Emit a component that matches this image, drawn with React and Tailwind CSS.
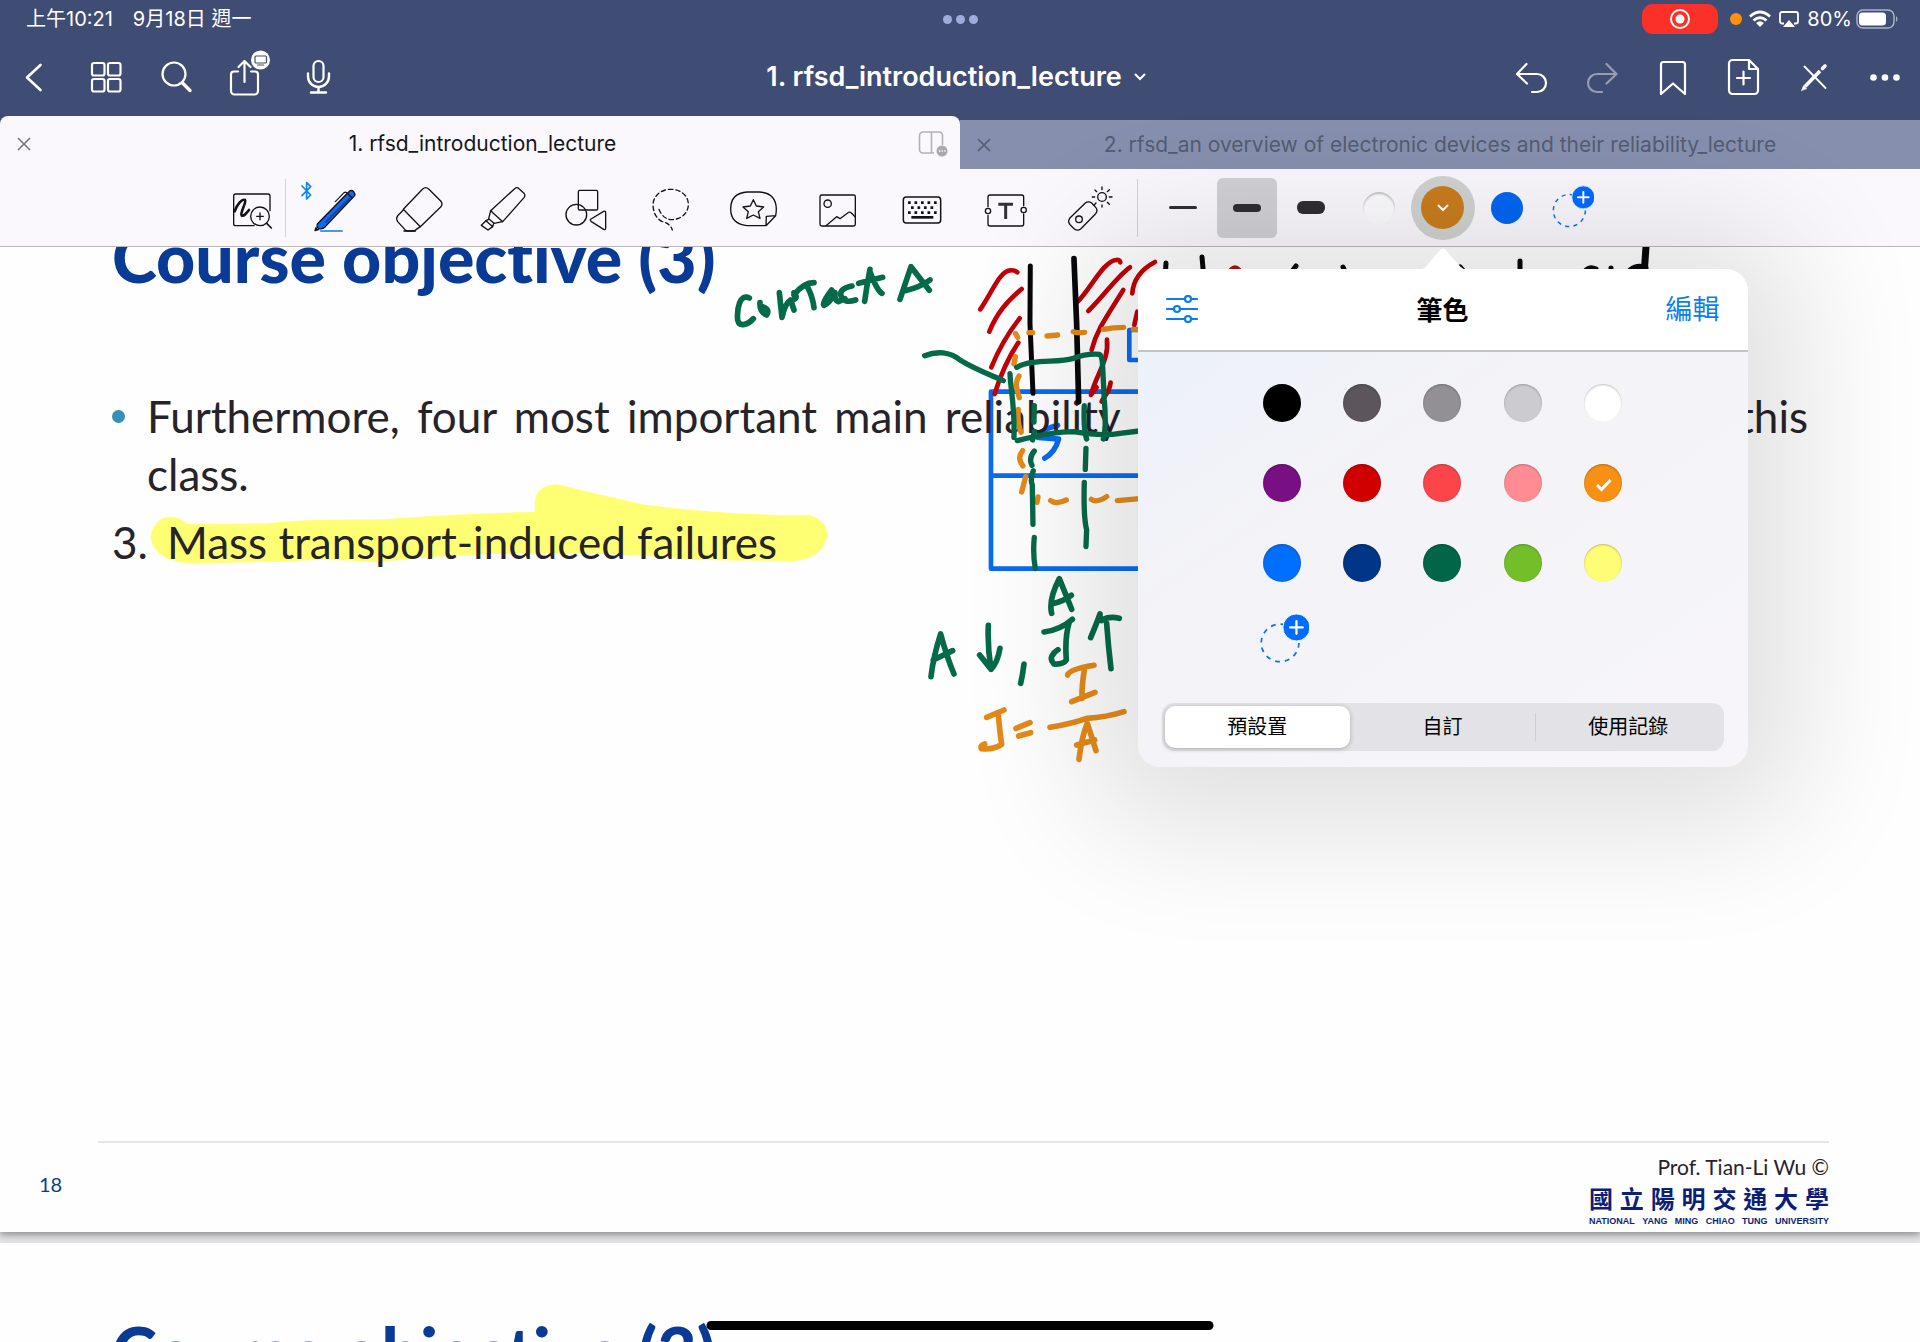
import React, { useState } from "react";

const UI = "font-['Inter','Noto_Sans_CJK_TC',sans-serif]";

/* ---------- navigation glyphs ---------- */

function NavIcon({ box, children, dim }) {
  return (
    <svg
      viewBox={box}
      className={dim ? "size-10 overflow-visible opacity-45" : "size-10 overflow-visible"}
      fill="none"
      stroke="white"
      strokeWidth="2.2"
      strokeLinecap="round"
      strokeLinejoin="round"
      aria-hidden="true"
    >
      {children}
    </svg>
  );
}

const leftNav = [
  {
    label: "返回",
    icon: (
      <NavIcon box="16 57 40 40">
        <path d="M40.500 65 27 77.500 40.500 90" strokeWidth="2.600" />
      </NavIcon>
    ),
  },
  {
    label: "縮圖",
    icon: (
      <NavIcon box="87 57 40 40">
        <rect x="92" y="63" width="12.500" height="12.500" rx="2" />
        <rect x="108" y="63" width="12.500" height="12.500" rx="2" />
        <rect x="92" y="79" width="12.500" height="12.500" rx="2" />
        <rect x="108" y="79" width="12.500" height="12.500" rx="2" />
      </NavIcon>
    ),
  },
  {
    label: "搜尋",
    icon: (
      <NavIcon box="158 57 40 40">
        <circle cx="174" cy="74" r="11.500" />
        <path d="M182.500 83 190 90.500" strokeWidth="3.400" />
      </NavIcon>
    ),
  },
  {
    label: "分享",
    icon: (
      <NavIcon box="229 57 40 40">
        <path d="M238 71.500h-4a3 3 0 0 0-3 3V91a3.500 3.500 0 0 0 3.500 3.500h20A3.500 3.500 0 0 0 258 91V74.500a3 3 0 0 0-3-3h-4" />
        <path d="M244.500 82V61.500M238.500 67l6-6 6 6" />
        <circle cx="260.500" cy="60" r="9.500" fill="white" stroke="none" />
        <rect x="255" y="56" width="11.500" height="7" rx="1" stroke="#3f4c73" strokeWidth="1.200" />
        <path d="M257.500 65h6" stroke="#3f4c73" strokeWidth="1.200" />
      </NavIcon>
    ),
  },
  {
    label: "錄音",
    icon: (
      <NavIcon box="300 57 40 40">
        <rect x="313.500" y="61" width="10" height="21" rx="5" />
        <path d="M308 73.500v3a10.500 10.500 0 0 0 21 0v-3M318.500 87v5M311 92.500h15" strokeWidth="2.400" />
      </NavIcon>
    ),
  },
];

const rightNav = [
  {
    label: "復原",
    icon: (
      <NavIcon box="1510 57 40 40">
        <path d="M1526.500 64 1517 74l10 9.500M1517.500 74H1537a9 9 0 0 1 0 18h-5" />
      </NavIcon>
    ),
  },
  {
    label: "重做",
    icon: (
      <NavIcon box="1581 57 40 40" dim>
        <path d="M1606.500 64l10 10-10 9.500M1616.500 74H1597a9 9 0 0 0 0 18h5" />
      </NavIcon>
    ),
  },
  {
    label: "書籤",
    icon: (
      <NavIcon box="1652 57 40 40">
        <path d="M1661 94V64.500a2.500 2.500 0 0 1 2.500-2.500h19a2.500 2.500 0 0 1 2.500 2.500V94l-12-10.500z" />
      </NavIcon>
    ),
  },
  {
    label: "新增頁面",
    icon: (
      <NavIcon box="1723 57 40 40">
        <path d="M1732.500 60H1749l9 9v21.500a3.500 3.500 0 0 1-3.500 3.500h-22a3.500 3.500 0 0 1-3.500-3.500v-27a3.500 3.500 0 0 1 3.500-3.500zM1749 60v9h9" />
        <path d="M1743.500 71.500v13M1737 78h13" />
      </NavIcon>
    ),
  },
  {
    label: "唯讀模式",
    icon: (
      <NavIcon box="1794 57 40 40">
        <path d="M1805 86.500 1820 71" strokeWidth="3.600" strokeLinecap="butt" />
        <path d="M1801.500 90.500l2-5 3 3z" fill="white" strokeWidth="0.500" />
        <path d="M1822.500 68.500 1825 66" strokeWidth="3.600" />
        <path d="M1804.500 66.500 1825.500 88" strokeWidth="1.800" />
      </NavIcon>
    ),
  },
  {
    label: "更多",
    icon: (
      <NavIcon box="1865 57 40 40">
        <g fill="white" stroke="none">
          <circle cx="1873.500" cy="77.500" r="3.300" />
          <circle cx="1885" cy="77.500" r="3.300" />
          <circle cx="1896.500" cy="77.500" r="3.300" />
        </g>
      </NavIcon>
    ),
  },
];

/* ---------- toolbar glyphs ---------- */

function ToolIcon({ box, children }) {
  return (
    <svg
      viewBox={box}
      className="size-[60px]"
      fill="none"
      stroke="#111118"
      strokeWidth="4"
      strokeLinecap="round"
      strokeLinejoin="round"
      aria-hidden="true"
    >
      {children}
    </svg>
  );
}

const zoomIcon = (
  <ToolIcon box="66 22 180 180">
    <path d="M162 165H107q-6 0-6-6V76q0-6 6-6h97q6 0 6 6v44" />
    <path d="M104 122C112 100 126 84 135 88c6 6-16 38-10 46 6 4 14-6 22-16" strokeWidth="8" />
    <circle cx="180" cy="137" r="28" />
    <path d="M180 127v20M170 137h20" />
    <path d="M200 158l14 14" strokeWidth="5" />
  </ToolIcon>
);

const tools = [
  {
    label: "鋼筆",
    icon: (
      <ToolIcon box="312 22 180 180">
        <path d="M306 46l26 27-12 12V36l12 12-26 27" stroke="#0a84ff" strokeWidth="5" />
        <path d="M362 181h65" stroke="#1a76d8" />
        <path d="M352 160 432 78l18-18q6-2 11 3 5 6 3 12L376 168q-8 8-19 6-8-4-5-14z" fill="#1268ee" />
        <path d="M442 68l14 14" />
        <path d="M406 93l26-27q4-3 8 0" strokeWidth="3.500" />
        <path d="M378 154l70-70" stroke="#1c3f86" strokeWidth="5" />
        <path d="M348 170l-3 10 11-3" fill="#111118" />
      </ToolIcon>
    ),
  },
  {
    label: "橡皮擦",
    icon: (
      <ToolIcon box="564 22 180 180">
        <path d="M610 116 668 55q9-8 18 0l36 36q8 9 0 18l-61 59z" />
        <path d="M610 118l-17 17q-6 9 0 18l22 24q4 4 8 4h16q5 0 9-4l13-9" />
        <path d="M612 181h34" strokeWidth="5" />
      </ToolIcon>
    ),
  },
  {
    label: "螢光筆",
    icon: (
      <ToolIcon box="816 22 180 180">
        <path d="M872 120 944 54q7-6 13 0l15 14q5 6 0 13l-64 72z" />
        <path d="M872 120l-6 24 16 14 26-5M866 146l-8 4 20 18 3-10" />
        <path d="M858 150l-14 14 20 14 14-10" />
      </ToolIcon>
    ),
  },
  {
    label: "形狀",
    icon: (
      <ToolIcon box="1068 22 180 180">
        <rect x="1135" y="59" width="58" height="59" rx="4" />
        <circle cx="1129" cy="132" r="31" />
        <path d="M1173 145l38-23q6-2 6 4v46q0 7-6 4l-38-24q-4-4 0-7z" />
      </ToolIcon>
    ),
  },
  {
    label: "套索",
    icon: (
      <ToolIcon box="0 22 180 180">
        <path d="M57 116q12 30 38 31c30-1 50-20 50-46S122 56 92 56 39 76 39 104q2 34 26 48 26 6 32 26" strokeDasharray="13 9" />
      </ToolIcon>
    ),
  },
  {
    label: "貼紙",
    icon: (
      <ToolIcon box="252 22 180 180">
        <path d="M378 165h-58q-48-6-48-50 0-48 50-51h36q50 3 51 51 0 10-2 20l-29 30zM378 164l1-27 28-2" />
        <path d="M340 87l9 19 22 3-16 14 5 20-20-10-20 10 5-20-16-14 22-3z" />
      </ToolIcon>
    ),
  },
  {
    label: "圖片",
    icon: (
      <ToolIcon box="502 22 180 180">
        <rect x="538" y="73" width="106" height="93" rx="5" />
        <circle cx="561" cy="99" r="11" />
        <path d="M556 165l32-27 10 6 26-19q4-2 8 2l12 12" />
      </ToolIcon>
    ),
  },
  {
    label: "鍵盤",
    icon: (
      <ToolIcon box="754 22 180 180">
        <rect x="788" y="79" width="112" height="78" rx="9" strokeWidth="4.500" />
        <g strokeLinecap="butt" strokeWidth="8">
          <path d="M802 96h88M802 126h88" strokeDasharray="8 11.500" />
          <path d="M811 111h68" strokeDasharray="8 11.500" />
          <path d="M812 140h66" />
        </g>
      </ToolIcon>
    ),
  },
  {
    label: "文字",
    icon: (
      <ToolIcon box="1004 22 180 180">
        <path d="M1040 108V79q0-6 6-6h95q6 0 6 6v26M1147 130v30q0 6-6 6h-95q-6 0-6-6v-26" />
        <circle cx="1040" cy="121" r="8" />
        <circle cx="1147" cy="118" r="8" />
        <path d="M1071 101h44M1093 102v43" stroke="#303035" strokeWidth="9" strokeLinecap="butt" />
      </ToolIcon>
    ),
  },
  {
    label: "雷射筆",
    icon: (
      <ToolIcon box="1258 22 180 180">
        <path d="M1334 97q9-7 19 0l12 13q8 9 0 19l-45 46q-9 7-19 0l-12-12q-9-10-2-20z" />
        <circle cx="1315" cy="146" r="10" />
        <circle cx="1384" cy="79" r="13" />
        <path d="M1360 104l6-7" />
        <path d="M1384 57v-8M1384 109v-6M1406 79h8M1362 79h-7M1400 63l6-6M1368 63l-5-5M1400 95l6 6" />
      </ToolIcon>
    ),
  },
];

/* ---------- colour picker ---------- */

const swatches = [
  ["黑色", "bg-black"],
  ["深灰", "bg-[#5c565c]"],
  ["灰色", "bg-[#929095]"],
  ["淺灰", "bg-[#cccbcf]"],
  ["白色", "bg-white"],
  ["紫色", "bg-[#780f82]"],
  ["深紅", "bg-[#d00000]"],
  ["紅色", "bg-[#fb4549]"],
  ["粉紅", "bg-[#ff8b93]"],
  ["橘色", "bg-[#f79013]"],
  ["藍色", "bg-[#006eff]"],
  ["深藍", "bg-[#003587]"],
  ["深綠", "bg-[#006647]"],
  ["綠色", "bg-[#74bf29]"],
  ["黃色", "bg-[#fffc76]"],
];

function AddColor({ large }) {
  return (
    <svg viewBox="0 0 56 56" className={large ? "size-14" : "size-[46px]"} fill="none" aria-hidden="true">
      <circle cx="26" cy="31" r="19.500" stroke="#0a74e8" strokeWidth="1.800" strokeDasharray="5 5.200" />
      <circle cx="43" cy="15" r="14" fill="#006bff" stroke="#f4f3f8" strokeWidth="1" />
      <path d="M43 8.500v13M36.500 15h13" stroke="white" strokeWidth="2.400" strokeLinecap="round" />
    </svg>
  );
}

function ColorPopover() {
  const [picked, setPicked] = useState("橘色");
  const [tab, setTab] = useState("預設置");
  const tabs = ["預設置", "自訂", "使用記錄"];
  return (
    <div
      role="dialog"
      aria-label="筆色"
      className="absolute top-[93px] left-1/2 z-20 w-[610px] -translate-x-1/2 rounded-[22px] bg-[#f5f4f8] shadow-[0_10px_130px_50px_rgba(0,0,0,0.12)]"
    >
      <svg viewBox="0 0 44 22" className="absolute -top-[21px] left-1/2 h-[22px] w-11 -translate-x-1/2" aria-hidden="true">
        <path d="M0 22Q4 20 8 15L19 2q3-3 6 0l11 13q4 5 8 7z" fill="white" />
      </svg>
      <header className="flex h-[83px] items-center justify-between rounded-t-[22px] border-b-2 border-[#c4c4c8] bg-white px-7">
        <button aria-label="設定" className="w-[54px]">
          <svg viewBox="0 0 32 28" className="h-7 w-8" fill="none" stroke="#0a7cf0" strokeWidth="2.200" strokeLinecap="round" aria-hidden="true">
            <path d="M1 4h17M26 4h5M1 14h6M15 14h16M1 24h17M26 24h5" />
            <circle cx="22" cy="4" r="3" />
            <circle cx="11" cy="14" r="3" />
            <circle cx="22" cy="24" r="3" />
          </svg>
        </button>
        <h2 className="pt-0.5 text-[26px] font-bold text-black">筆色</h2>
        <button className="pt-0.5 text-[27px] text-[#0a7fe6]">編輯</button>
      </header>
      <div className="rounded-b-[22px] bg-linear-to-br from-[#ecf1fb] via-[#f3f3f7] via-30% to-[#f7f5f9] px-6 pb-4">
        <div className="mx-auto grid w-[402px] grid-cols-5 justify-items-center gap-y-[42px] pt-8">
          {swatches.map(([name, color]) => (
            <label key={name} className="relative flex size-[38px]">
              <input
                type="radio"
                name="pen-color"
                aria-label={name}
                checked={picked === name}
                onChange={() => setPicked(name)}
                className={`size-[38px] appearance-none rounded-full shadow-[inset_0_1px_2px_rgba(0,0,0,0.25)] ${color}`}
              />
              {picked === name && (
                <svg viewBox="0 0 38 38" className="pointer-events-none absolute inset-0" fill="none" aria-hidden="true">
                  <path d="M13 21l4.500 4.500L26.500 16" stroke="white" strokeWidth="3" />
                </svg>
              )}
            </label>
          ))}
          <button aria-label="新增顏色" className="-mt-3 flex w-[54px]">
            <AddColor large />
          </button>
        </div>
        <div className="mt-[35px] grid h-12 grid-cols-3 rounded-xl bg-[#e3e2e6] p-[3px]">
          {tabs.map((name, i) => (
            <button
              key={name}
              onClick={() => setTab(name)}
              className={`rounded-[10px] text-xl text-black ${
                tab === name ? "bg-white shadow-[0_1px_5px_rgba(0,0,0,0.25)]" : ""
              }`}
            >
              <span className={`block leading-7 ${i === 2 && tab !== name ? "border-l border-[#cfced3]" : ""}`}>{name}</span>
            </button>
          ))}
        </div>
      </div>
    </div>
  );
}

/* ---------- handwriting ---------- */

function Underlay() {
  return (
    <svg viewBox="0 247 1920 985" className="pointer-events-none absolute top-0 left-0 h-[985px] w-[1920px]" fill="none" aria-hidden="true">
      <path
        transform="translate(80 240) scale(.5102 .3333)"
        fill="#ffff73"
        d="M138 890Q145 830 180 830 200 835 210 852L370 850Q420 838 600 838 700 825 892 815 885 735 935 733 1020 765 1100 792 1250 825 1430 826 1465 840 1465 888 1455 955 1400 963L1200 960Q1060 935 850 940 700 945 580 967 480 955 400 965L220 970Q145 965 138 890z"
      />
      <g transform="translate(720 240) scale(.3333)" stroke="#0a6af2" strokeWidth="14" strokeLinecap="round" strokeLinejoin="round">
        <path d="M1270 455H813V986H1270M813 707H1270" />
        <path d="M1260 270H1228V360H1260" />
        <path d="M1013 556Q985 562 958 580M955 593L1016 597Q1006 636 974 655" strokeWidth="16" />
      </g>
    </svg>
  );
}

function Ink() {
  return (
    <svg viewBox="0 247 1920 985" className="pointer-events-none absolute top-0 left-0 h-[985px] w-[1920px]" fill="none" strokeLinecap="round" strokeLinejoin="round" aria-hidden="true">
      <g transform="translate(720 240) scale(.3333)">
        <g stroke="#c10008" strokeWidth="14">
          <path d="M781 208C815 160 840 90 872 91Q885 90 892 97M808 275C830 220 860 185 905 147M814 382C835 330 860 285 899 235M824 462C840 410 860 360 895 308" />
          <path d="M1072 186C1110 150 1150 64 1188 60Q1200 58 1201 67M1105 213C1150 170 1190 110 1230 82M1115 330C1130 270 1160 230 1210 150M1237 160C1240 120 1260 90 1305 66" />
          <path d="M1161 299C1168 360 1130 400 1113 465L1130 442M1172 428C1168 460 1150 470 1145 485M1243 255L1252 215" />
        </g>
        <g stroke="#08080a">
          <path d="M931 78L930 250 939 460" strokeWidth="15" />
          <path d="M1062 56L1070 250 1076 485" strokeWidth="17" />
        </g>
        <g stroke="#e48a18" strokeWidth="16">
          <path d="M887 281L893 292M927 278H938M981 288L1013 285M1060 275Q1075 280 1094 277M1150 268Q1180 262 1211 262M1240 268h12M886 350L882 372M897 408C883 430 890 445 898 473M895 508Q892 550 903 577M908 632Q890 655 909 678M917 710L905 756M954 771L951 787M992 782Q1010 795 1039 780M1114 778Q1130 790 1160 770M1192 782L1260 776" />
        </g>
        <g stroke="#056a49" strokeWidth="17">
          <path d="M614 347C650 333 690 335 720 360 760 385 800 400 850 422M870 401C872 450 885 500 882 592M890 382C940 355 1010 370 1060 355Q1100 340 1138 343 1147 345 1148 380L1153 480Q1160 560 1150 597M892 602C940 590 1000 575 1060 575Q1150 590 1200 580L1258 573" strokeWidth="16" />
          <path d="M943 497L942 546M943 575L938 600M943 633Q925 655 936 676M940 692Q930 720 937 735L939 853M943 892Q938 940 946 986M1093 497Q1090 570 1100 597M1098 625L1096 688M1093 727Q1090 830 1100 870L1098 920" strokeWidth="16" />
          <path d="M88 174C60 160 50 205 53 240 58 264 85 254 100 236M120 188Q118 215 140 225 152 206 122 198M178 158L186 232Q195 190 212 180L222 210M222 158Q235 172 222 178M222 165Q250 128 282 128M262 140Q278 170 282 203M335 150Q305 190 312 196 330 190 345 158 342 180 355 185L375 176M396 138Q360 145 362 165 370 192 407 180M450 88Q440 140 434 184M416 130L488 112M450 95Q470 150 486 160" />
          <path d="M540 178L573 80Q600 115 628 151M556 152Q600 142 630 120" />
        </g>
      </g>
      <g transform="translate(900 560) scale(.3333)" strokeWidth="17">
        <g stroke="#056a49">
          <path d="M455 160Q445 120 478 56 500 110 515 148M455 132Q490 125 514 106M432 216Q480 210 517 178M508 186Q494 230 499 300 490 314 462 312 450 300 456 288 462 276 474 269M572 233Q590 190 600 162M600 162Q600 190 610 178 630 168 658 175M620 190Q625 260 633 326M93 350Q100 290 122 222 140 290 162 342M100 300L158 272M265 196Q262 260 273 328 292 310 300 265M239 285L273 328M372 312Q368 345 362 370" />
        </g>
        <g stroke="#e48a18">
          <path d="M503 345Q508 328 582 316M553 330Q545 380 546 415M515 425L585 397M450 502Q520 490 560 475 620 472 672 455M537 598Q545 530 562 490 575 530 588 572M530 555L584 540M260 472L312 450M295 465Q300 520 305 553 280 570 244 566 240 556 254 552M348 505L390 488M356 528L392 518" />
        </g>
      </g>
      <g stroke="#08080a" strokeWidth="5">
        <path d="M1166 263L1165 280M1202 257L1204 280M1296 266L1290 274M1343 267L1346 274M1460 267L1466 274M1520 261V280M1586 270Q1590 266 1596 269M1611 268V274M1630 270Q1638 264 1646 268" />
        <path d="M1646 247L1644 275" strokeWidth="7" />
      </g>
      <path d="M1231 270Q1235 266 1239 270" stroke="#b01018" strokeWidth="5" />
    </svg>
  );
}

/* ---------- page ---------- */

function StatusBar() {
  return (
    <div className="grid h-[38px] grid-cols-3 items-center text-white">
      <div className="flex gap-5 pl-[26px] text-xl">
        <span>上午10:21</span>
        <span>9月18日 週一</span>
      </div>
      <div className="flex justify-center gap-1">
        <i className="size-[9px] rounded-full bg-[#a0abdc]" />
        <i className="size-[9px] rounded-full bg-[#a0abdc]" />
        <i className="size-[9px] rounded-full bg-[#a0abdc]" />
      </div>
      <div className="flex items-center justify-end pr-[22px]">
        <span className="mr-3 flex h-[30px] w-[76px] items-center justify-center rounded-[11px] bg-[#fb3029]">
          <svg viewBox="0 0 22 22" className="size-[22px]" fill="none" stroke="white" strokeWidth="2" aria-hidden="true">
            <circle cx="11" cy="11" r="9" />
            <circle cx="11" cy="11" r="4.500" fill="white" stroke="none" />
          </svg>
        </span>
        <i className="mr-[7px] size-3 rounded-full bg-[#ff9208]" />
        <svg viewBox="0 0 22 16" className="mr-2 h-4 w-[22px] overflow-visible" fill="none" stroke="white" strokeWidth="2.800" aria-hidden="true">
          <path d="M1 5.500Q11-3.500 21 5.500M4.500 9.500Q11 4 17.500 9.500" />
          <path d="M11 16l-4-4q4-3.500 8 0z" fill="white" stroke="none" />
        </svg>
        <svg viewBox="0 0 20 18" className="mr-2 h-[18px] w-5" fill="none" stroke="white" strokeWidth="1.800" aria-hidden="true">
          <path d="M5 13.500H3a2 2 0 0 1-2-2V4a2 2 0 0 1 2-2h14a2 2 0 0 1 2 2v7.500a2 2 0 0 1-2 2h-2" />
          <path d="M10 10l6 7H4z" fill="white" stroke="none" />
        </svg>
        <span className="mr-1 text-xl">80%</span>
        <svg viewBox="0 0 42 20" className="h-5 w-[42px]" fill="none" aria-hidden="true">
          <rect x="1" y="1" width="37" height="18" rx="6" stroke="#a9b1c8" strokeWidth="1.500" />
          <rect x="3" y="3.500" width="27" height="13" rx="3.500" fill="white" />
          <path d="M40 7q3 3 0 6z" fill="#a9b1c8" />
        </svg>
      </div>
    </div>
  );
}

function NavBar() {
  return (
    <nav className="grid h-[78px] grid-cols-[1fr_auto_1fr] items-center text-white">
      <div className="flex">
        {leftNav.map((n) => (
          <button key={n.label} aria-label={n.label} className="flex w-[71px] justify-center">
            {n.icon}
          </button>
        ))}
      </div>
      <button className="flex items-center gap-3 pr-2 text-[27px] font-semibold">
        1. rfsd_introduction_lecture
        <svg viewBox="0 0 12 8" className="h-2 w-3" fill="none" stroke="white" strokeWidth="2" strokeLinecap="round" aria-hidden="true">
          <path d="M1.500 1.500 6 6l4.500-4.500" />
        </svg>
      </button>
      <div className="flex justify-end">
        {rightNav.map((n) => (
          <button key={n.label} aria-label={n.label} className="flex w-[71px] justify-center">
            {n.icon}
          </button>
        ))}
      </div>
    </nav>
  );
}

function CloseIcon() {
  return (
    <svg viewBox="0 0 14 14" className="size-[14px]" fill="none" stroke="currentColor" strokeWidth="1.600" aria-hidden="true">
      <path d="M1 1l12 12M13 1 1 13" />
    </svg>
  );
}

function TabBar() {
  return (
    <div className="flex h-[53px] items-end text-[21px]">
      <div className="grid h-full w-1/2 grid-cols-[1fr_auto_1fr] items-center rounded-t-lg bg-[#faf8fd] pt-0.5 pr-3 pl-[17px]">
        <button aria-label="關閉分頁" className="justify-self-start text-[#77757b]">
          <CloseIcon />
        </button>
        <button className="text-[#16151a]">1. rfsd_introduction_lecture</button>
        <button aria-label="分割視窗" className="justify-self-end">
          <svg viewBox="0 0 30 26" className="h-[26px] w-[30px]" fill="none" stroke="#b3b1b7" strokeWidth="1.600" aria-hidden="true">
            <path d="M16 22H5a3.500 3.500 0 0 1-3.500-3.500v-14A3.500 3.500 0 0 1 5 1h16a3.500 3.500 0 0 1 3.500 3.500V14M13.500 1v21" />
            <circle cx="24" cy="20" r="5.500" fill="#aaa8ae" stroke="none" />
            <path d="M21 20h6.500" stroke="white" strokeDasharray="1.300 1.300" />
          </svg>
        </button>
      </div>
      <div className="grid h-[49px] w-1/2 grid-cols-[1fr_auto_1fr] items-center bg-[#8690ae] px-[17px] text-[#545c74]">
        <button aria-label="關閉分頁" className="justify-self-start">
          <CloseIcon />
        </button>
        <button>2. rfsd_an overview of electronic devices and their reliability_lecture</button>
      </div>
    </div>
  );
}

function Toolbar() {
  return (
    <div className="relative z-10 flex h-[78px] items-center justify-center border-b border-[#b9b7bc] bg-[#faf8fd] pr-24">
      <button aria-label="縮放視窗" className="flex w-[60px] shrink-0 justify-center">
        {zoomIcon}
      </button>
      <i className="mr-1.5 ml-[3px] h-[58px] w-px bg-[#d3d1d6]" />
      {tools.map((t) => (
        <button key={t.label} aria-label={t.label} className="flex w-[84px] shrink-0 justify-center [&>svg]:overflow-visible">
          {t.icon}
        </button>
      ))}
      <i className="mr-[13px] ml-[5px] h-[58px] w-px bg-[#d3d1d6]" />
      <button aria-label="細" className="flex w-16 shrink-0 justify-center">
        <i className="h-[3px] w-7 rounded-full bg-[#2f2e33]" />
      </button>
      <button aria-label="中" className="mx-0.5 flex size-[60px] shrink-0 items-center justify-center rounded-md bg-[#d1d0d4]">
        <i className="h-2 w-7 rounded bg-[#2f2e33]" />
      </button>
      <button aria-label="粗" className="flex w-16 shrink-0 justify-center">
        <i className="h-[13px] w-7 rounded-md bg-[#2f2e33]" />
      </button>
      <button aria-label="白色" className="ml-1 flex w-16 shrink-0 justify-center">
        <i className="size-8 rounded-full bg-[#fcfbfd] shadow-[inset_0_2px_2px_rgba(0,0,0,0.22)]" />
      </button>
      <div className="relative flex w-16 shrink-0 justify-center">
        <button aria-label="橘色" className="flex size-16 items-center justify-center rounded-full bg-[#d0d1d1]">
          <i className="flex size-[43px] items-center justify-center rounded-full bg-[#c97d1e]">
            <svg viewBox="0 0 12 8" className="h-2 w-3" fill="none" stroke="white" strokeWidth="2" strokeLinecap="round" aria-hidden="true">
              <path d="M1.500 1.500 6 6l4.500-4.500" />
            </svg>
          </i>
        </button>
        <ColorPopover />
      </div>
      <button aria-label="藍色" className="flex w-16 shrink-0 justify-center">
        <i className="size-8 rounded-full bg-[#0066f2]" />
      </button>
      <button aria-label="新增顏色" className="flex w-16 shrink-0 justify-center">
        <AddColor />
      </button>
    </div>
  );
}

function SlideTitle() {
  return (
    <h1 className="text-[68px] leading-[72px] font-black text-[#083a96] [font-variant-ligatures:none]">
      Course objective (3)
    </h1>
  );
}

export default function App() {
  return (
    <div className={`relative flex h-screen flex-col overflow-hidden bg-[#3f4c73] ${UI}`}>
      <header className="shrink-0">
        <StatusBar />
        <NavBar />
        <TabBar />
      </header>
      <Toolbar />
      <main className="flex-1 overflow-hidden bg-[#e3e2e5] font-['Lato','Noto_Sans_CJK_TC',sans-serif] text-[#262329]">
        <article className="relative bg-[#fefefe] shadow-[0_2px_8px_rgba(0,0,0,0.45)]">
          <Underlay />
          <div className="relative flow-root px-28">
            <div className="-mt-[26px]">
              <SlideTitle />
            </div>
            <ul className="mt-[94px] text-[44px] leading-[58px]">
              <li className="flex">
                <span className="mt-[23px] mr-[22px] size-[13px] shrink-0 rounded-full bg-[#3690b8]" />
                <p className="flex-1 text-justify">
                  Furthermore, four most important main reliability concerns will be presented in this class.
                </p>
              </li>
              <li className="mt-2.5 flex">
                <span className="w-[55px]">3.</span>
                <p>Mass transport-induced failures</p>
              </li>
            </ul>
          </div>
          <footer className="relative mx-[98px] mt-[570px] mr-[91px] flex h-[91px] justify-between border-t-2 border-[#e6e6e7]">
            <span className="-ml-[59px] self-center pb-2 text-xl text-[#0b3a92]">18</span>
            <div className="flex flex-col items-end pt-3">
              <p className="text-[21px] leading-6">Prof. Tian-Li Wu ©</p>
              <div className="mt-1.5 flex w-[240px] justify-between text-2xl leading-7 font-bold text-[#0b1f78]">
                {Array.from("國立陽明交通大學").map((c) => (
                  <span key={c}>{c}</span>
                ))}
              </div>
              <p className="mt-0.5 flex w-[240px] justify-between font-['Liberation_Sans',sans-serif] text-[9px] leading-3 font-bold text-[#0b1f78]">
                {"NATIONAL YANG MING CHIAO TUNG UNIVERSITY".split(" ").map((w) => (
                  <span key={w}>{w}</span>
                ))}
              </p>
            </div>
          </footer>
          <Ink />
        </article>
        <article className="mt-[11px] bg-[#fefefe] px-28 pt-[72px]">
          <SlideTitle />
        </article>
      </main>
      <i className="absolute bottom-3 left-1/2 h-[9px] w-[507px] -translate-x-1/2 rounded-full bg-black" />
    </div>
  );
}
